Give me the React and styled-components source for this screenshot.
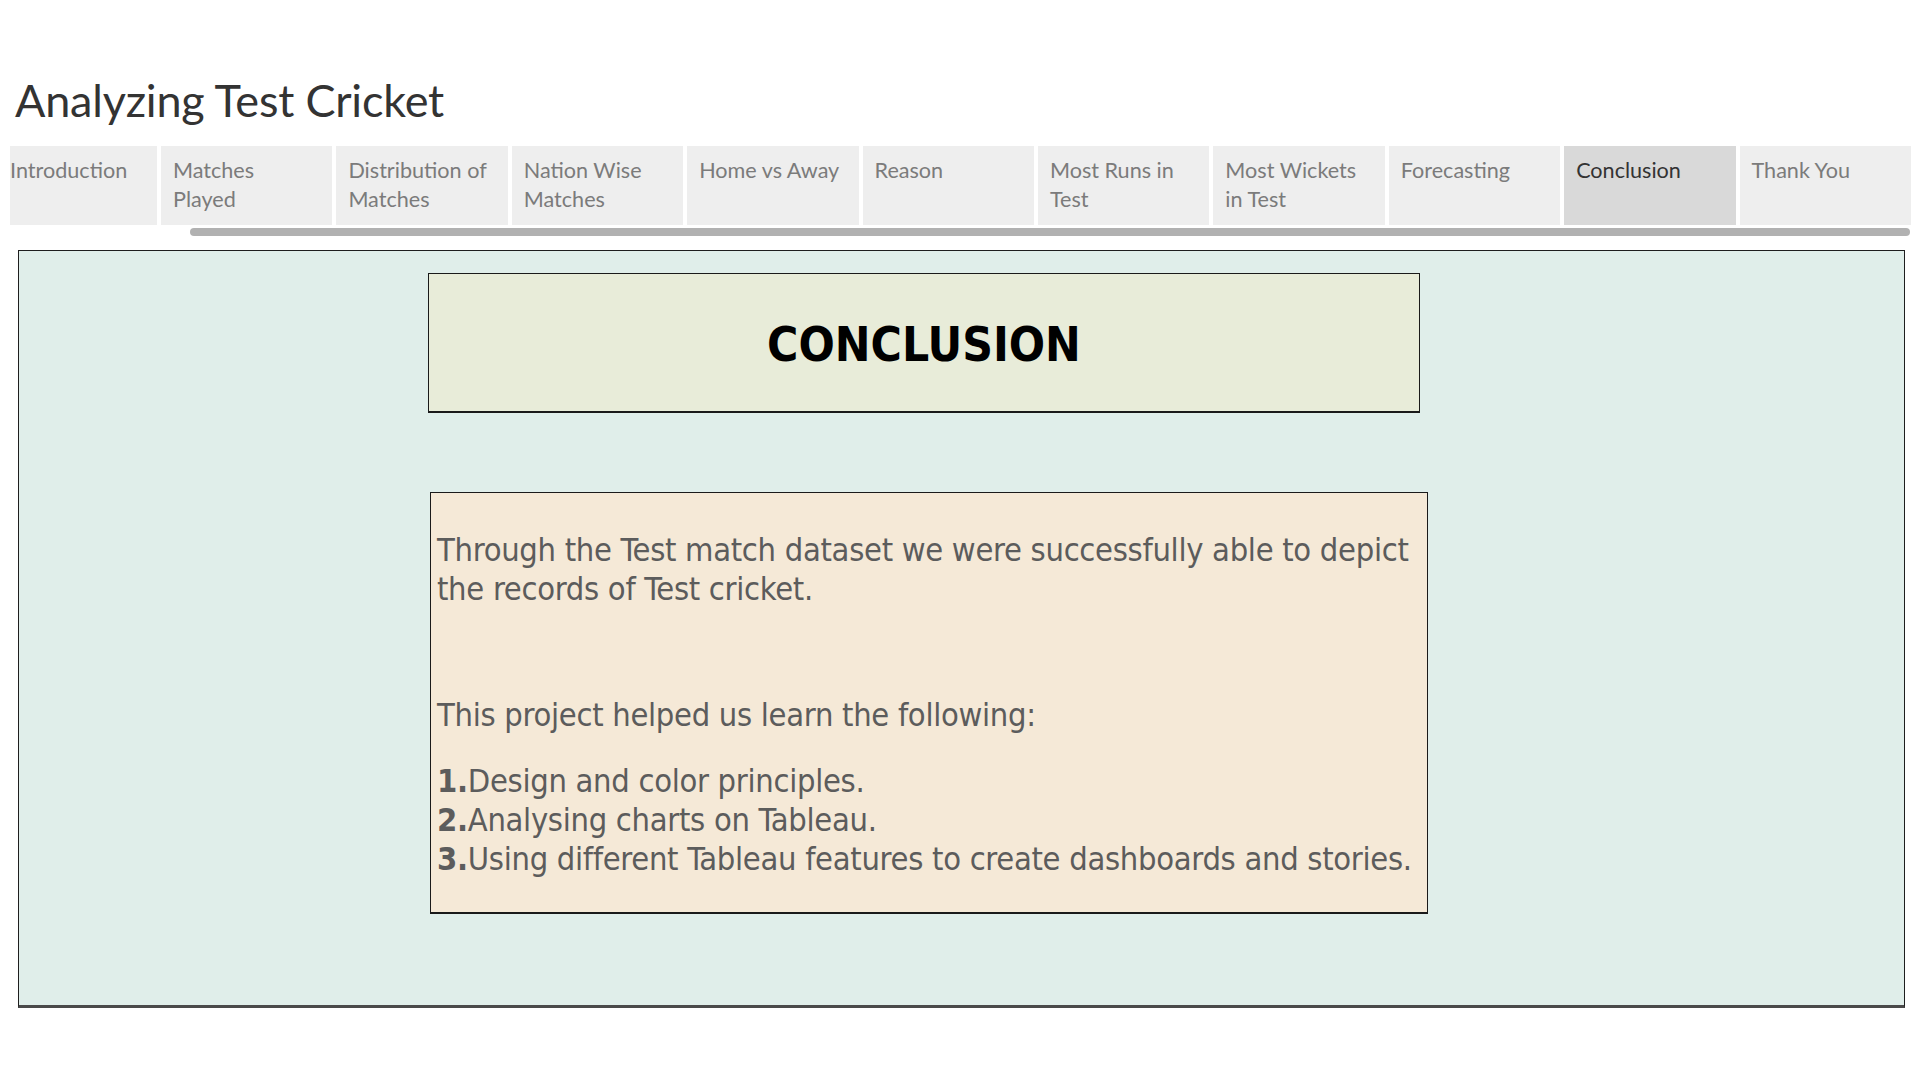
import React from "react";
import styled, { createGlobalStyle } from "styled-components";

const Global = createGlobalStyle`
  html, body { margin: 0; padding: 0; background: #ffffff; }
  body { font-family: "Lato", "Noto Sans", sans-serif; }
`;

const Page = styled.div`
  width: 1920px;
  height: 1080px;
  box-sizing: border-box;
  padding: 72px 10px 0 10px;
  display: flex;
  flex-direction: column;
  overflow: hidden;
`;

const Title = styled.h1`
  margin: 0 0 0 5px;
  font-family: "Lato", "Noto Sans", sans-serif;
  font-weight: 400;
  font-size: 45px;
  line-height: 56px;
  height: 56px;
  color: #333333;
  letter-spacing: -0.2px;
`;

const TabStrip = styled.div`
  margin-top: 18px;
  display: flex;
  gap: 4px;
  height: 79px;
`;

const Tab = styled.div`
  flex: 0 0 ${(p) => (p.$first ? "147px" : "171.4px")};
  box-sizing: border-box;
  padding: 10px 6px 0 ${(p) => (p.$first ? "0" : "12px")};
  background: ${(p) => (p.$active ? "#d9d9d9" : "#eeeeee")};
  color: ${(p) => (p.$active ? "#333333" : "#7b7b7b")};
  font-family: "Lato", "Noto Sans", sans-serif;
  font-size: 21.6px;
  line-height: 28.5px;
  white-space: nowrap;
  overflow: hidden;
`;

const ScrollTrack = styled.div`
  height: 8px;
  margin-top: 3px;
  padding-left: 180px;
  display: flex;
`;

const ScrollThumb = styled.div`
  flex: 1;
  background: #b1b1b1;
  border-radius: 4px;
`;

const Panel = styled.div`
  margin: 14px 5px 0 8px;
  height: 758px;
  box-sizing: border-box;
  background: #e0eeea;
  border: 1px solid #1e1e1e;
  border-bottom: 3px solid #4a4a4a;
  display: flex;
  flex-direction: column;
  padding-top: 22px;
`;

const HeadingBox = styled.div`
  margin-left: ${(p) => p.$left}px;
  width: ${(p) => p.$width}px;
  height: 140px;
  box-sizing: border-box;
  padding-top: 4px;
  background: #e8ecd9;
  border: 1px solid #1a1a1a;
  border-bottom-width: 2px;
  display: flex;
  align-items: center;
  justify-content: center;
`;

const Heading = styled.h2`
  margin: 0;
  font-family: "DejaVu Sans Condensed", "DejaVu Sans", sans-serif;
  font-weight: 700;
  font-size: 47.5px;
  color: #000000;
`;

const TextBox = styled.div`
  margin-top: 79px;
  margin-left: ${(p) => p.$left}px;
  width: ${(p) => p.$width}px;
  height: 422px;
  box-sizing: border-box;
  background: #f5e9d7;
  border: 1px solid #1a1a1a;
  border-bottom-width: 2px;
  padding: 38px 6px 0 6px;
  font-family: "DejaVu Sans Condensed", "DejaVu Sans", sans-serif;
  color: #5c5c5c;
  font-size: 32.4px;
  line-height: 39px;
`;

const Para = styled.p`
  margin: ${(p) => p.$before || 0}px 0 ${(p) => p.$after || 0}px 0;
  letter-spacing: -0.3px;
`;

const Num = styled.b`
  font-weight: 700;
  color: #5c5c5c;
`;

const tabs = [
  ["Introduction"],
  ["Matches", "Played"],
  ["Distribution of", "Matches"],
  ["Nation Wise", "Matches"],
  ["Home vs Away"],
  ["Reason"],
  ["Most Runs in", "Test"],
  ["Most Wickets", "in Test"],
  ["Forecasting"],
  ["Conclusion"],
  ["Thank You"],
];

export default function App() {
  return (
    <>
      <Global />
      <Page>
        <Title>Analyzing Test Cricket</Title>
        <TabStrip>
          {tabs.map((lines, i) => (
            <Tab key={i} $first={i === 0} $active={lines[0] === "Conclusion"}>
              {lines.map((l, j) => (
                <div key={j}>{l}</div>
              ))}
            </Tab>
          ))}
        </TabStrip>
        <ScrollTrack>
          <ScrollThumb />
        </ScrollTrack>
        <Panel>
          <HeadingBox $left={409} $width={992}>
            <Heading>CONCLUSION</Heading>
          </HeadingBox>
          <TextBox $left={411} $width={998}>
            <Para>
              Through the Test match dataset we were successfully able to depict
              <br />
              the records of Test cricket.
            </Para>
            <Para $before={87} $after={27}>
              This project helped us learn the following:
            </Para>
            <Para>
              <Num>1.</Num>Design and color principles.
            </Para>
            <Para>
              <Num>2.</Num>Analysing charts on Tableau.
            </Para>
            <Para>
              <Num>3.</Num>Using different Tableau features to create dashboards and stories.
            </Para>
          </TextBox>
        </Panel>
      </Page>
    </>
  );
}
